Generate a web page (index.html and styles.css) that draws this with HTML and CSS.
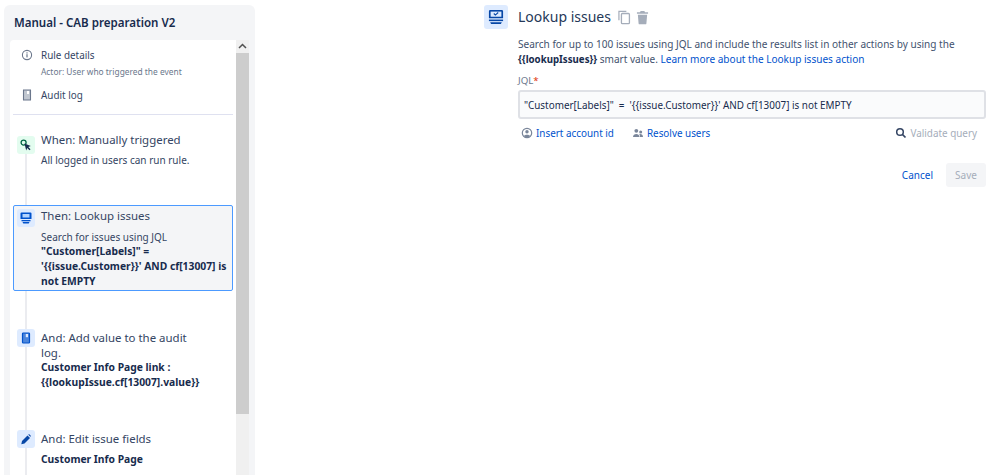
FILE: index.html
```html
<!DOCTYPE html>
<html lang="en">
<head>
<meta charset="utf-8">
<title>Lookup issues</title>
<link rel="stylesheet" href="styles.css">
</head>
<body>
<div class="page">
  <aside class="panel">
    <h1 class="rule-name">Manual - CAB preparation V2</h1>
    <div class="card">
      <div class="scroll-content">
        <div class="meta-row meta-first">
          <svg class="meta-icon" viewBox="0 0 12 12"><circle cx="6" cy="6" r="4.6" fill="none" stroke="#6b778c" stroke-width="1.1"/><rect x="5.4" y="5.2" width="1.2" height="3.2" fill="#6b778c"/><rect x="5.4" y="3.3" width="1.2" height="1.2" fill="#6b778c"/></svg>
          <div>
            <div class="meta-title">Rule details</div>
            <div class="meta-sub">Actor: User who triggered the event</div>
          </div>
        </div>
        <div class="meta-row meta-audit">
          <svg class="meta-icon" viewBox="0 0 12 12"><path d="M2.5 1h7v10h-7z" fill="#c1c7d0" stroke="#6b778c" stroke-width="1.1"/><rect x="6" y="2" width="2" height="3" fill="#fff"/></svg>
          <div class="meta-title">Audit log</div>
        </div>
        <hr class="divider">
        <div class="steps">
          <div class="step step-when">
            <span class="step-icon icon-green"><svg viewBox="0 0 14 14"><circle cx="4.6" cy="4.6" r="2.5" fill="none" stroke="#006644" stroke-width="1.3"/><path d="M5.5 5.5l6.3 2.4-2.5 1 2.2 2.4-1 1-2.3-2.4-1 2.5z" fill="#172b4d"/></svg></span>
            <div class="step-body">
              <div class="step-title">When: Manually triggered</div>
              <div class="step-desc when-desc">All logged in users can run rule.</div>
            </div>
          </div>
          <div class="step step-then">
            <span class="step-icon icon-blue"><svg viewBox="0 0 14 14"><path d="M2.5 1.500h9a1 1 0 0 1 1 1v5.500h-11v-5.500a1 1 0 0 1 1-1z" fill="#0052cc"/><rect x="3.500" y="3" width="7" height="3.500" fill="#b3d4ff"/><rect x="2.500" y="9" width="9" height="1.300" fill="#0052cc"/><path d="M3.500 11h7l-.8 1.500h-5.400z" fill="#0052cc"/></svg></span>
            <div class="step-body">
              <div class="step-title">Then: Lookup issues</div>
              <div class="step-desc then-desc">Search for issues using JQL</div>
              <div class="step-strong">"Customer[Labels]" = '{{issue.Customer}}' AND cf[13007] is not EMPTY</div>
            </div>
          </div>
          <div class="step step-log">
            <span class="step-icon icon-blue"><svg viewBox="0 0 14 14"><rect x="3.500" y="2" width="7" height="10" rx=".8" fill="#4c86dc" stroke="#0052cc" stroke-width="1.200"/><rect x="6.800" y="3" width="2.200" height="3.200" fill="#deebff"/></svg></span>
            <div class="step-body">
              <div class="step-title narrow">And: Add value to the audit log.</div>
              <div class="step-strong">Customer Info Page link :<br>{{lookupIssue.cf[13007].value}}</div>
            </div>
          </div>
          <div class="step step-edit">
            <span class="step-icon icon-blue"><svg viewBox="0 0 14 14"><path d="M3 9l5.500-5.500 2.500 2.500-5.500 5.500-3.200.7z" fill="#0747a6"/><path d="M9.300 2.700l.7-.7 2 2-.7.7z" fill="#0747a6"/></svg></span>
            <div class="step-body">
              <div class="step-title">And: Edit issue fields</div>
              <div class="step-strong edit-strong">Customer Info Page</div>
            </div>
          </div>
        </div>
      </div>
      <div class="scrollbar">
        <div class="scroll-btn"><svg viewBox="0 0 13 13"><path d="M3 8l3.500-3.500 3.500 3.500" fill="none" stroke="#505050" stroke-width="1.500"/></svg></div>
        <div class="scroll-thumb"></div>
      </div>
    </div>
  </aside>
  <main class="editor">
    <header class="editor-head">
      <span class="head-icon"><svg viewBox="0 0 14 14"><path d="M2.500 1.500h9a1 1 0 0 1 1 1v5.500h-11v-5.500a1 1 0 0 1 1-1z" fill="#0747a6"/><rect x="2.800" y="2.800" width="8.400" height="4" fill="#deebff"/><path d="M5.300 4.300l1.200 1.200 2.200-2" fill="none" stroke="#0747a6" stroke-width=".9"/><rect x="1.500" y="9" width="11" height="1.200" fill="#0747a6"/><path d="M2.500 11h9l-.7 1.500h-7.600z" fill="#0747a6"/></svg></span>
      <h2 class="editor-title">Lookup issues</h2>
      <div class="head-actions">
        <svg class="tool-icon" viewBox="0 0 14 16"><path d="M1 11V1.500h8" fill="none" stroke="#a5adba" stroke-width="1.300"/><rect x="3.700" y="3.700" width="8.600" height="11" rx="1" fill="none" stroke="#a5adba" stroke-width="1.400"/></svg>
        <svg class="tool-icon" viewBox="0 0 14 16"><path d="M5 1h4l.7 1.300H13v1.700H1V2.300h3.300z" fill="#a5adba"/><path d="M2 5h10l-.8 9.500a1 1 0 0 1-1 .9H3.800a1 1 0 0 1-1-.9z" fill="#a5adba"/></svg>
      </div>
    </header>
    <p class="intro">Search for up to 100 issues using JQL and include the results list in other actions by using the <b>{{lookupIssues}}</b> smart value. <a class="link" href="#">Learn more about the Lookup issues action</a></p>
    <label class="field-label">JQL<span class="req">*</span></label>
    <div class="jql-input">"Customer[Labels]"  =  '{{issue.Customer}}' AND cf[13007] is not EMPTY</div>
    <div class="helpers">
      <a class="helper link" href="#"><svg class="help-icon" viewBox="0 0 12 12"><circle cx="6" cy="6" r="4.700" fill="none" stroke="#7a869a" stroke-width="1.200"/><circle cx="6" cy="4.700" r="1.700" fill="#7a869a"/><path d="M2.800 9.300c.6-2 5.800-2 6.400 0L6 10.700z" fill="#7a869a"/></svg>Insert account id</a>
      <a class="helper link" href="#"><svg class="help-icon" viewBox="0 0 12 12"><circle cx="4.300" cy="3.800" r="1.900" fill="#7a869a"/><circle cx="8.700" cy="5" r="1.500" fill="#7a869a"/><path d="M1 10c0-4 6.500-4 6.500 0zM8 10c0-1.500-.2-2-.7-3 2-.5 3.700.7 3.700 3z" fill="#7a869a"/></svg>Resolve users</a>
      <span class="validate"><svg class="help-icon search" viewBox="0 0 12 12"><circle cx="5" cy="5" r="3.300" fill="none" stroke="#344563" stroke-width="1.500"/><path d="M7.500 7.500l3 3" stroke="#344563" stroke-width="1.700"/></svg>Validate query</span>
    </div>
    <div class="actions">
      <a class="cancel link" href="#">Cancel</a>
      <button class="save" type="button">Save</button>
    </div>
  </main>
</div>
</body>
</html>
```
FILE: styles.css
```css
* { box-sizing: border-box; }
html, body { margin: 0; padding: 0; height: 100%; overflow: hidden; background: #fff; }
body { font-family: "Noto Sans", "Open Sans", sans-serif; color: #172b4d; font-size: 11px; }
.page { display: flex; height: 475px; overflow: hidden; }
.panel { width: 251px; margin: 5px 0 0 4px; height: 470px; background: #f4f5f7; border-radius: 6px 6px 0 0; padding: 0 6px 0 6px; display: flex; flex-direction: column; flex: none; }
.rule-name { margin: 0; height: 35px; padding: 9px 0 0 4px; font-size: 11.550px; line-height: 18px; font-weight: 600; color: #172b4d; white-space: nowrap; }
.card { flex: 1; display: flex; background: #fff; border-radius: 4px 0 0 0; min-height: 0; overflow: hidden; }
.scroll-content { width: 226px; flex: none; padding: 0 3px; position: relative; }
.scrollbar { width: 13px; background: #f0f0f0; flex: none; }
.scroll-btn { height: 13px; }
.scroll-btn svg { display: block; width: 13px; height: 13px; }
.scroll-thumb { height: 361px; background: #cdcdcd; }
.meta-row { display: flex; gap: 8px; padding-left: 8px; }
.meta-first { padding-top: 7px; height: 46px; }
.meta-audit { height: 28px; padding-top: 1px; }
.meta-icon { width: 12px; height: 12px; flex: none; margin-top: 2px; }
.meta-title { font-size: 9.900px; line-height: 16px; color: #344563; }
.meta-sub { font-size: 8.400px; line-height: 12px; margin-top: 3px; color: #6b778c; }
.divider { margin: 0; border: 0; height: 1px; background: #dfe1f0; }
.steps { position: relative; }
.steps::before { content: ""; position: absolute; left: 12px; top: 21px; width: 2px; height: 340px; background: #ebecf0; }
.step { display: flex; position: relative; gap: 6px; padding: 3px 3px 0 4px; }
.step-icon { width: 18px; height: 18px; flex: none; border-radius: 3px; display: flex; align-items: center; justify-content: center; }
.step-icon svg { width: 14px; height: 14px; }
.icon-green { background: #e3fcef; }
.icon-blue { background: #deebff; }
.step-body { min-width: 0; }
.step-title { font-size: 11.450px; line-height: 15px; color: #344563; }
.step-desc { font-size: 10px; line-height: 14px; margin-top: 5px; color: #344563; }
.step-strong { font-size: 10.300px; line-height: 15px; font-weight: 700; color: #172b4d; }
.step-when { margin-top: 18px; height: 72px; }
.step-when .step-body { margin-top: -4px; }
.when-desc { margin-top: 6px; }
.step-then { height: 86px; background: #f4f5f7; border: 1px solid #4c9aff; border-radius: 2px; padding: 3px 3px 0 3px; }
.step-then .step-body { margin-top: -1px; }
.then-desc { margin-top: 7px; }
.step-log { margin-top: 36px; height: 101px; padding-top: 2px; }
.step-log .step-body { margin-top: 1px; }
.narrow { max-width: 155px; }
.step-edit { height: 45px; padding-top: 2px; }
.step-edit .step-body { margin-top: 1px; }
.edit-strong { margin-top: 6px; }
.editor { margin-left: 229px; width: 502px; padding-top: 5px; position: relative; flex: none; }
.editor-head { display: flex; align-items: center; height: 24px; }
.head-icon { width: 24px; height: 24px; background: #deebff; border-radius: 3px; display: flex; align-items: center; justify-content: center; flex: none; }
.head-icon svg { width: 18px; height: 18px; }
.editor-title { margin: 0 0 0 10px; font-size: 14px; line-height: 24px; font-weight: 400; color: #253858; }
.head-actions { display: flex; gap: 5px; margin: 0 0 0 7px; }
.tool-icon { width: 13px; height: 15px; display: block; }
.intro { margin: 8px 0 0 34px; width: 468px; font-size: 10.050px; line-height: 15px; color: #42526e; }
.intro b { color: #172b4d; font-size: 9.700px; }
.link { color: #0052cc; text-decoration: none; }
.field-label { display: block; margin: 7px 0 0 34px; font-size: 9.700px; line-height: 13px; color: #6b778c; }
.req { color: #de350b; }
.jql-input { margin: 3px 0 0 34px; width: 468px; height: 29px; background: #fafbfc; border: 2px solid #dfe1e6; border-radius: 3px; padding: 0 4px; font-size: 9.900px; line-height: 26px; color: #172b4d; white-space: pre; }
.helpers { display: flex; margin: 7px 0 0 37px; width: 456px; height: 14px; align-items: center; font-size: 9.900px; }
.helper { display: flex; align-items: center; gap: 3px; margin-right: 18px; }
.help-icon { width: 12px; height: 12px; flex: none; }
.validate { margin-left: auto; display: flex; align-items: center; gap: 3px; color: #a5adba; }
.actions { display: flex; justify-content: flex-end; align-items: center; gap: 13px; margin: 23px 0 0 34px; width: 468px; }
.cancel { font-size: 10px; }
.save { width: 40px; height: 24px; border: 0; border-radius: 3px; background: #f4f5f7; color: #a5adba; font: inherit; font-size: 10px; padding: 0; }
```
